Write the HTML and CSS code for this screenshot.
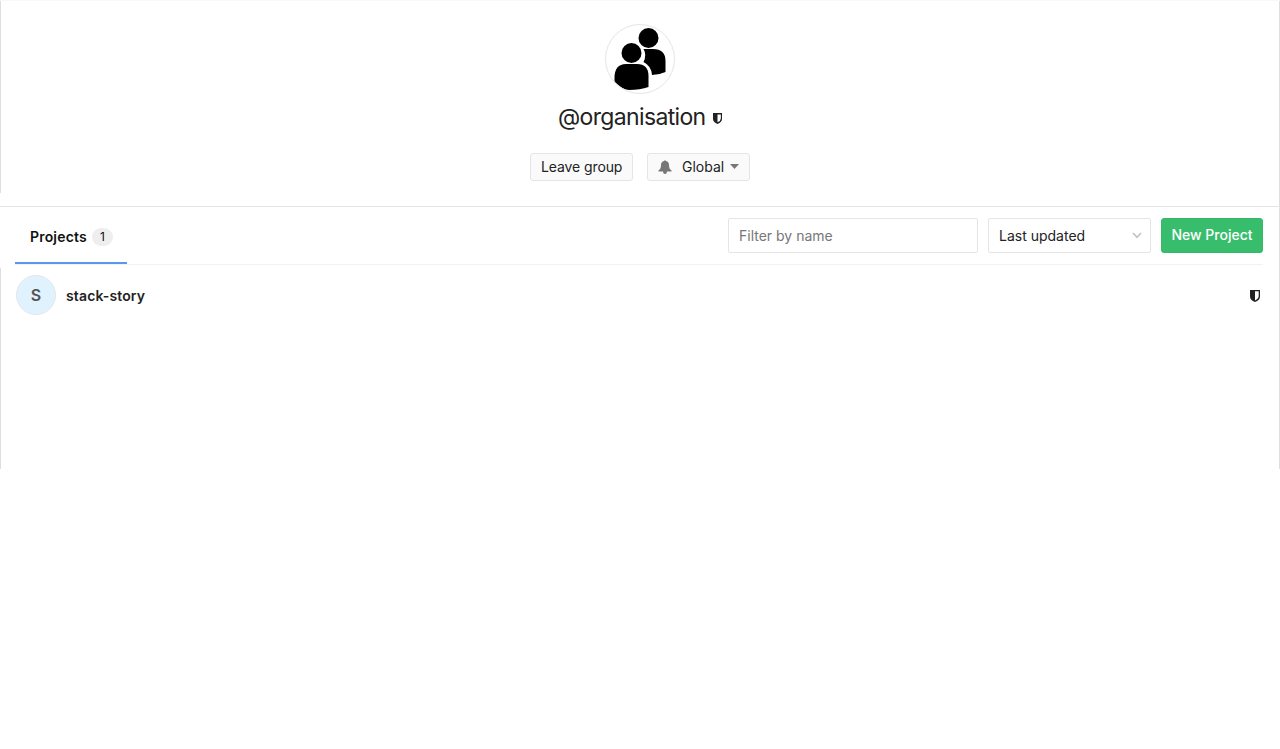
FILE: index.html
```html
<!DOCTYPE html>
<html lang="en">
<head>
<meta charset="utf-8">
<title>@organisation</title>
<link rel="stylesheet" href="styles.css">
</head>
<body>
<main class="page">
  <header class="group-header">
    <div class="group-avatar">
      <svg width="68" height="68" viewBox="0 0 68 68">
        <circle cx="42.5" cy="13" r="10"/>
        <path d="M37.500 24H47Q59.500 24 59.500 36V47Q53 50 46 50Q45.500 41 37.500 37Q41 30 37.500 24Z"/>
        <circle cx="25.500" cy="28" r="10"/>
        <path d="M8.500 53Q8.500 39 20 39H31Q42.500 39 42.500 51V62Q34 65 23 65Q15 64 8.500 57Z"/>
      </svg>
    </div>
    <h1 class="group-title"><span class="group-name">@organisation</span>
      <svg class="title-shield" width="9" height="11" viewBox="0 0 10 12"><path fill-rule="evenodd" d="M0 0H10V6.500Q10 10 5 12Q0 10 0 6.500ZM5 1.500V10.300Q8.700 8.500 8.700 6V1.500Z"/></svg>
    </h1>
    <div class="group-actions">
      <button class="btn btn-leave"><span class="leave-label">Leave group</span></button>
      <button class="btn btn-notify">
        <svg class="bell" width="14" height="14" viewBox="0 0 14 14"><path d="M6 1Q7 -.7 8 1Q11 1.800 11 5Q11 9 13.500 10.500V11.500H.5V10.500Q3 9 3 5Q3 1.800 6 1ZM5 11.500H9Q9 14 7 14Q5 14 5 11.500Z"/></svg>
        <span class="notify-label">Global</span>
        <svg class="caret" width="9" height="5" viewBox="0 0 9 5"><path d="M0 0H9L4.500 5Z"/></svg>
      </button>
    </div>
  </header>
  <section class="content">
    <nav class="toolbar">
      <a class="tab"><span class="tab-label">Projects</span><span class="badge">1</span></a>
      <div class="controls">
        <input class="filter" type="text" placeholder="Filter by name">
        <button class="sort"><span class="sort-label">Last updated</span>
          <svg width="10" height="7" viewBox="0 0 10 7"><path d="M1 1L5 5.300L9 1" fill="none" stroke="#c4c4c4" stroke-width="1.800"/></svg>
        </button>
        <button class="btn-new"><span class="new-label">New Project</span></button>
      </div>
    </nav>
    <div class="project">
      <span class="project-avatar">S</span>
      <a class="project-name">stack-story</a>
      <svg class="project-shield" width="10" height="12" viewBox="0 0 10 12"><path fill-rule="evenodd" d="M0 0H10V6.500Q10 10 5 12Q0 10 0 6.500ZM5 1.300V10.500Q8.700 8.700 8.700 6V1.300Z"/></svg>
    </div>
  </section>
</main>
</body>
</html>
```
FILE: styles.css
```css
* { box-sizing: border-box; }
body {
  margin: 0;
  background: #fff;
  color: #222;
  font-family: Inter, "Liberation Sans", sans-serif;
  font-size: 14px;
}
button, input { font: inherit; color: inherit; margin: 0; }
svg { display: block; flex: none; }
.page {
  height: 469px;
  border-top: 1px solid #f8f8f8;
  background:
    linear-gradient(#dfdfdf, #dfdfdf) 0 0 / 1px 192px no-repeat,
    linear-gradient(#dfdfdf, #dfdfdf) 0 100% / 1px 201px no-repeat,
    linear-gradient(#dfdfdf, #dfdfdf) 100% 0 / 1px 100% no-repeat;
}
.group-header {
  display: flex;
  flex-direction: column;
  align-items: center;
  height: 206px;
  padding-top: 23px;
  border-bottom: 1px solid #e5e5e5;
}
.group-avatar {
  width: 70px;
  height: 70px;
  border: 1px solid #e5e5e5;
  border-radius: 50%;
  overflow: hidden;
}
.group-title {
  display: flex;
  align-items: center;
  gap: 7px;
  height: 30px;
  margin: 8px 0 21px;
  font-size: 23px;
  font-weight: 400;
  line-height: 30px;
}
.group-name { width: 148px; white-space: nowrap; letter-spacing: -.65px; }
.title-shield { margin-top: 3px; fill: #222; }
.group-actions { display: flex; gap: 14px; }
.btn {
  display: flex;
  align-items: center;
  height: 28px;
  padding: 0 10px 1px;
  border: 1px solid #e5e5e5;
  border-radius: 3px;
  background: #fafafa;
  line-height: 17px;
  white-space: nowrap;
}
.btn-leave { width: 103px; letter-spacing: -.1px; }
.btn-notify { width: 103px; }
.bell { fill: #777; }
.notify-label { width: 43px; margin: 0 6px 0 10px; text-align: left; }
.caret { fill: #777; }
.content { padding: 0 17px 0 15px; }
.toolbar {
  display: flex;
  justify-content: space-between;
  height: 58px;
  border-bottom: 1px solid #f2f2f2;
}
.tab {
  display: flex;
  align-items: center;
  width: 112px;
  height: 57px;
  padding: 5px 0 0 15px;
  border-bottom: 2px solid #5c97ec;
  color: #111;
  font-weight: 600;
}
.tab-label { width: 62px; padding-bottom: 1px; letter-spacing: .18px; }
.badge {
  width: 21px;
  height: 18px;
  border-radius: 9px;
  background: #eee;
  font-size: 12px;
  font-weight: 400;
  line-height: 18px;
  text-align: center;
}
.controls { display: flex; gap: 10px; padding-top: 11px; }
.filter {
  width: 250px;
  height: 35px;
  padding: 0 10px;
  border: 1px solid #e5e5e5;
  border-radius: 2px;
  background: #fff;
}
.filter::placeholder { color: #777; opacity: 1; }
.sort {
  display: flex;
  align-items: center;
  justify-content: space-between;
  width: 163px;
  height: 35px;
  padding: 0 8px 0 10px;
  border: 1px solid #e5e5e5;
  border-radius: 2px;
  background: #fff;
}
.btn-new {
  width: 102px;
  height: 35px;
  padding: 0 0 2px;
  border: 1px solid #35b868;
  border-radius: 3px;
  background: #38bd6d;
  color: #fff;
  font-weight: 500;
  white-space: nowrap;
}
.project {
  display: flex;
  align-items: center;
  height: 60px;
  padding: 0 3px 0 1px;
}
.project-avatar {
  width: 40px;
  height: 40px;
  margin-right: 10px;
  border: 1px solid #e3e7ea;
  border-radius: 50%;
  background: #e1f2ff;
  color: #555;
  font-size: 16px;
  font-weight: 600;
  line-height: 38px;
  text-align: center;
}
.project-name { flex: 1; padding-top: 1px; font-weight: 600; letter-spacing: .13px; }
.project-shield { margin-top: 2px; fill: #222; }
```
